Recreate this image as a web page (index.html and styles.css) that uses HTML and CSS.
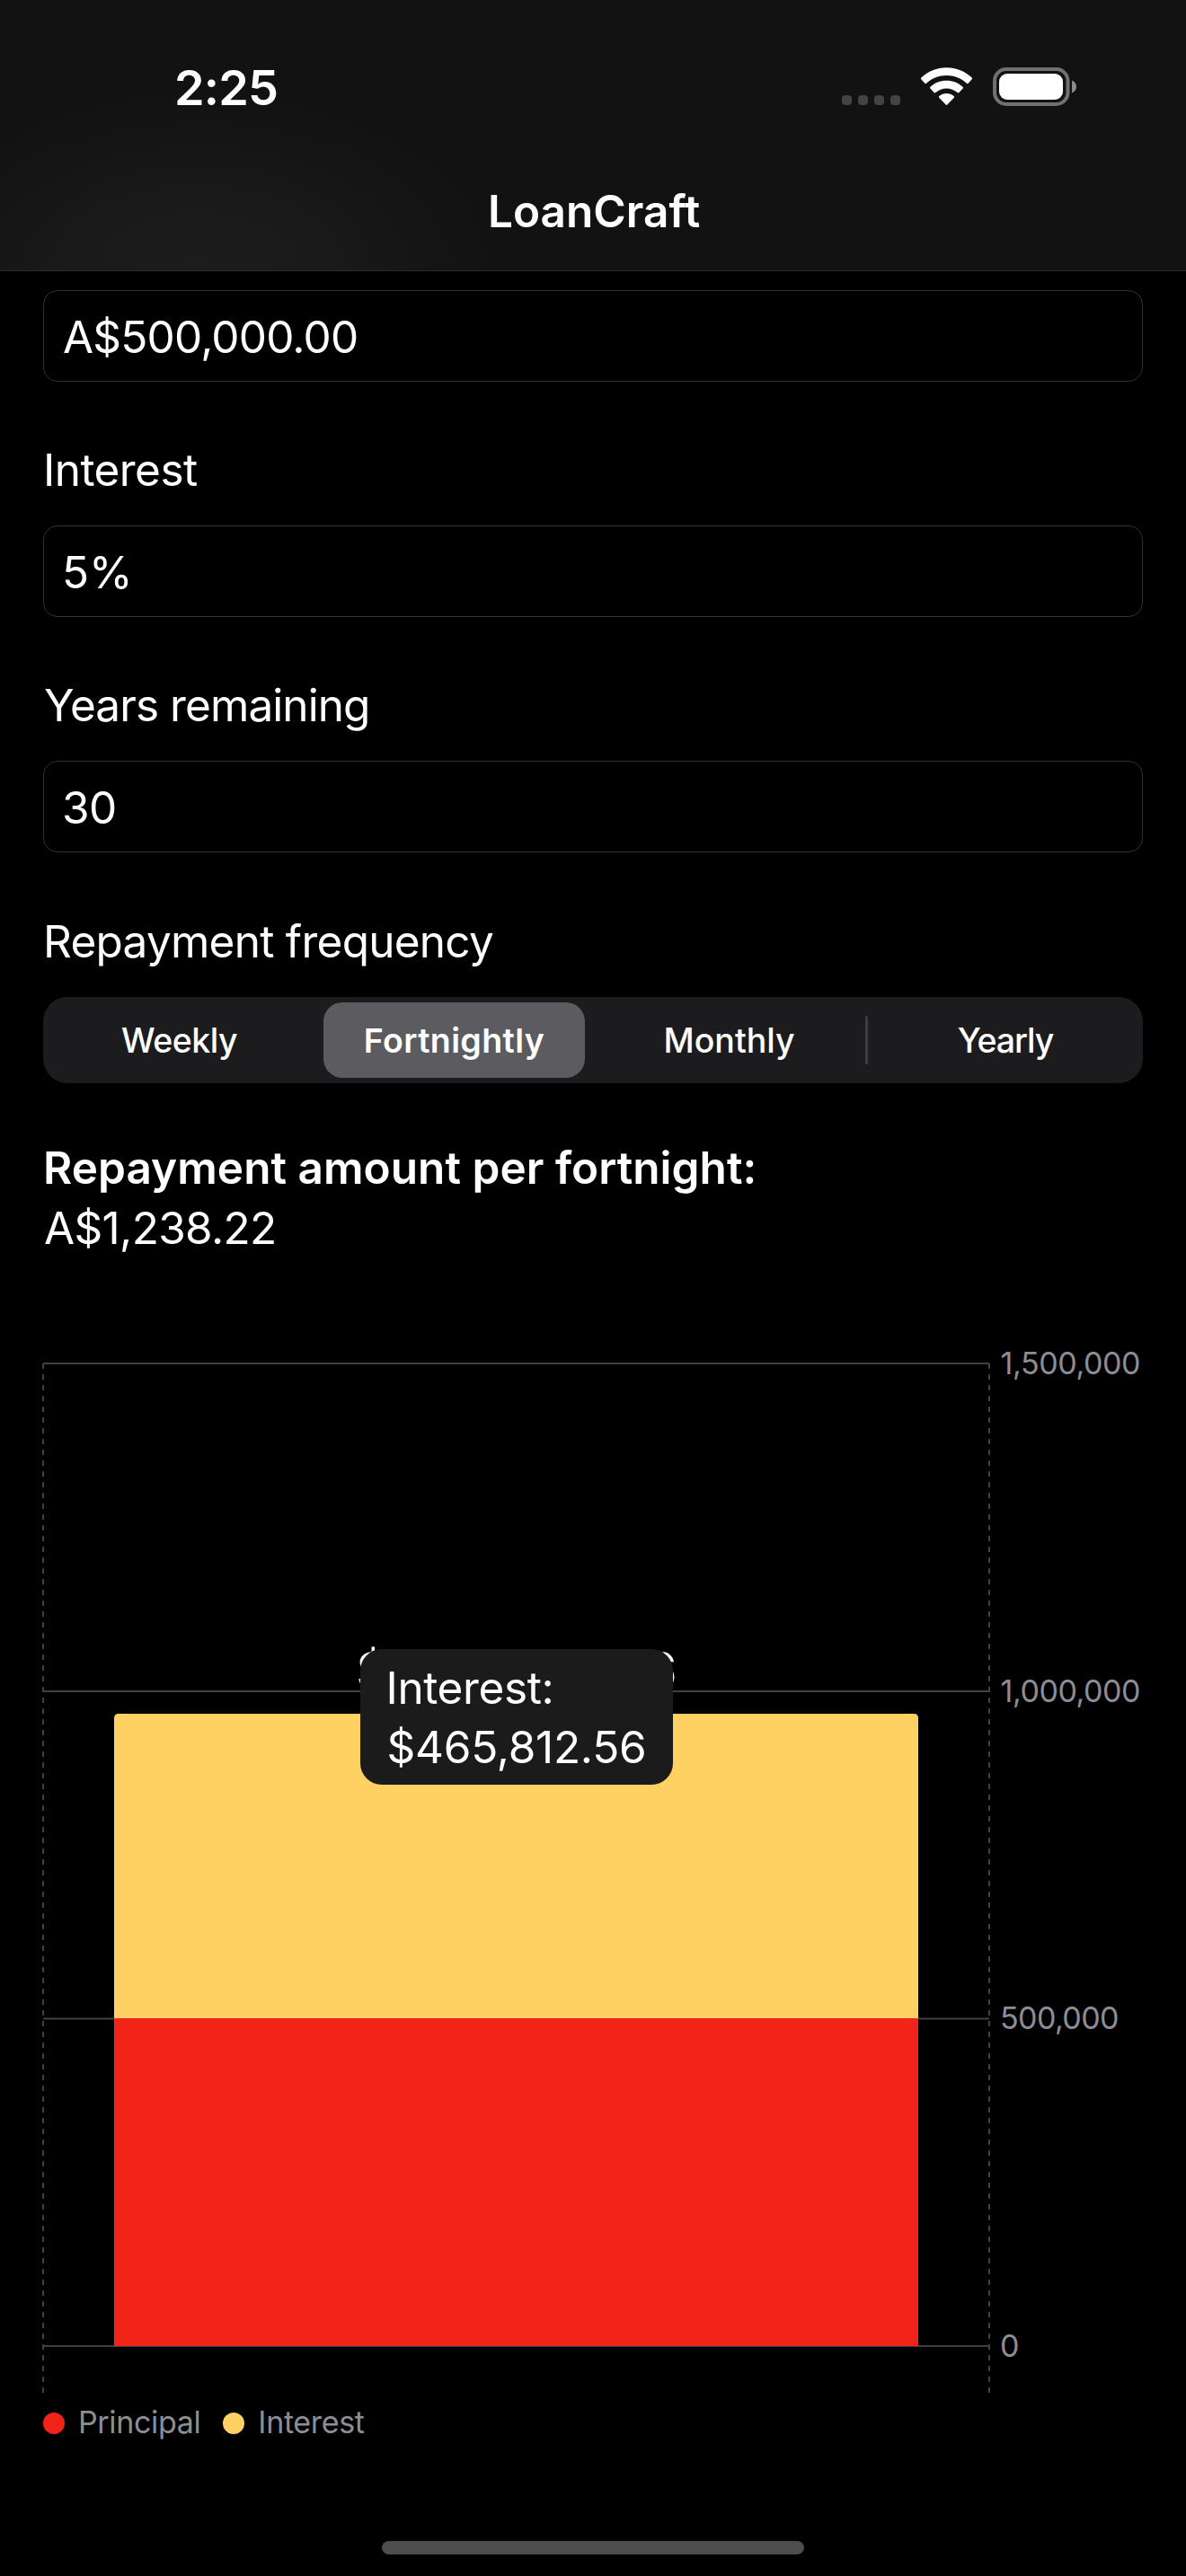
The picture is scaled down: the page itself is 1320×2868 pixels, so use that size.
FILE: index.html
```html
<!DOCTYPE html>
<html lang="en">
<head>
<meta charset="utf-8">
<title>LoanCraft</title>
<link rel="stylesheet" href="styles.css">
</head>
<body>
<header class="header">
  <div class="status">
    <span class="time">2:25</span>
    <svg class="status-icons" width="264" height="44" viewBox="936 75 264 44" aria-hidden="true">
      <g fill="#434343">
        <rect x="937" y="106" width="11" height="11" rx="4"/>
        <rect x="955" y="106" width="11" height="11" rx="4"/>
        <rect x="973" y="106" width="11" height="11" rx="4"/>
        <rect x="991" y="106" width="11" height="11" rx="4"/>
      </g>
      <g fill="#fff">
        <path d="M1053.500 75.200C1042.800 75.200 1032.800 79.300 1025.300 86.500Q1024.400 87.400 1025.300 88.300L1029.300 92.700Q1030.200 93.600 1031.100 92.700C1037.100 87.100 1045 84 1053.500 84C1062 84 1069.900 87.100 1075.900 92.700Q1076.800 93.600 1077.700 92.700L1081.700 88.300Q1082.600 87.400 1081.700 86.500C1074.200 79.300 1064.200 75.200 1053.500 75.200Z"/>
        <path d="M1053.500 89.700C1046.500 89.700 1040.200 92.300 1035.400 96.700Q1034.500 97.600 1035.400 98.500L1039.600 103Q1040.500 103.900 1041.400 103C1044.700 100.100 1048.900 98.400 1053.500 98.400C1058.100 98.400 1062.300 100.100 1065.600 103Q1066.500 103.900 1067.400 103L1071.600 98.500Q1072.500 97.600 1071.600 96.700C1066.800 92.300 1060.500 89.700 1053.500 89.700Z"/>
        <path d="M1053.500 103.900C1050.400 103.900 1047.500 105 1045.300 106.900Q1044.300 107.800 1045.200 108.700L1052.600 116.500Q1053.500 117.400 1054.400 116.500L1061.800 108.700Q1062.700 107.800 1061.700 106.900C1059.500 105 1056.600 103.900 1053.500 103.900Z"/>
      </g>
      <rect x="1107" y="77" width="81.500" height="39" rx="13" fill="none" stroke="#717171" stroke-width="4"/>
      <rect x="1112" y="82" width="71" height="29" rx="9" fill="#fff"/>
      <path d="M1193 89.500C1196.500 91 1198 93.500 1198 96.500S1196.500 102 1193 103.500Z" fill="#8b8b8b"/>
    </svg>
  </div>
  <h1 class="title">LoanCraft</h1>
</header>

<main class="content">
  <div class="field amount">A$500,000.00</div>

  <label class="label interest">Interest</label>
  <div class="field percent">5%</div>

  <label class="label years">Years remaining</label>
  <div class="field term">30</div>

  <label class="label frequency">Repayment frequency</label>
  <div class="segments">
    <span class="segment weekly">Weekly</span>
    <span class="segment selected">Fortnightly</span>
    <span class="segment monthly">Monthly</span>
    <span class="divider"></span>
    <span class="segment yearly">Yearly</span>
  </div>

  <section class="result">
    <strong class="result-title">Repayment amount per fortnight:</strong>
    <span class="result-value">A$1,238.22</span>
  </section>

  <section class="chart">
    <svg class="plot" width="1232" height="1170" viewBox="48 1500 1232 1170">
      <g stroke="#414143" stroke-width="2">
        <path d="M48 1518H1101M48 1883H1101M48 2247.500H1101M48 2612H1101"/>
        <path d="M48 1518V2664M1101 1518V2664" stroke-dasharray="6 6"/>
      </g>
      <path d="M127 2248V1913Q127 1908 132 1908H1017Q1022 1908 1022 1913V2248Z" fill="#ffd062"/>
      <rect x="127" y="2247" width="895" height="365" fill="#f22319"/>
      <g class="axis">
        <text x="1113.500" y="1530" textLength="156">1,500,000</text>
        <text x="1113.500" y="1894.500" textLength="156">1,000,000</text>
        <text x="1113" y="2259" textLength="132.500">500,000</text>
        <text x="1113" y="2624">0</text>
      </g>
      <text class="total" x="396.500" y="1880.500" textLength="357">$965,812.56</text>
    </svg>
    <div class="tooltip">
      <div class="tooltip-name">Interest:</div>
      <div class="tooltip-value">$465,812.56</div>
    </div>
  </section>

  <div class="legend">
    <span class="dot principal"></span><span class="legend-text">Principal</span>
    <span class="dot interest-dot"></span><span class="legend-text">Interest</span>
  </div>
</main>
<div class="home-indicator"></div>
</body>
</html>
```
FILE: styles.css
```css
* { box-sizing: border-box; }

body {
  margin: 0;
  width: 1320px;
  height: 2868px;
  overflow: hidden;
  display: flex;
  flex-direction: column;
  background: #000;
  color: #fff;
  font: 400 49.5px/60px Inter, "Liberation Sans", sans-serif;
  white-space: nowrap;
}

.header {
  height: 302px;
  border-bottom: 1px solid #2b2b2b;
  background:
    radial-gradient(ellipse 340px 200px at 220px 302px, #1d1d1d 0%, #1a1a1a 40%, #141414 80%, rgba(18, 18, 18, 0) 100%),
    #121212;
}

.status {
  display: flex;
  justify-content: space-between;
  height: 205px;
  padding: 65px 120px 0 194px;
}

.time {
  font-size: 54px;
  line-height: 65px;
  font-weight: 600;
  letter-spacing: -0.84px;
}

.status-icons { margin-top: 10px; }

.title {
  margin: 0;
  padding-left: 543px;
  font-size: 49.5px;
  line-height: 60px;
  font-weight: 600;
}

.content {
  display: flex;
  flex-direction: column;
  padding: 21px 48px 0;
}

.field {
  height: 102px;
  padding: 21px 21px 0;
  border: 1px solid #323232;
  border-radius: 16px;
}

.amount { letter-spacing: -0.81px; }
.percent { letter-spacing: 0; padding-left: 20px; }
.term { letter-spacing: -0.57px; padding-left: 20px; }

.label { margin: 68px 0 32px; }
.interest { letter-spacing: -0.56px; }
.years { letter-spacing: -0.92px; padding-left: 1px; }
.frequency { margin-top: 69px; letter-spacing: -0.74px; }

.segments {
  display: flex;
  align-items: center;
  height: 96px;
  border-radius: 27px;
  background: #1c1c1e;
  font-size: 37.5px;
  line-height: 85px;
  font-weight: 500;
  text-align: center;
}

.weekly { width: 312px; padding-right: 9px; letter-spacing: -0.5px; }
.selected {
  width: 291px;
  height: 84px;
  border-radius: 21px;
  background: #5b5b60;
  font-weight: 600;
  letter-spacing: 0.39px;
}
.monthly { width: 312px; padding-left: 9px; }
.divider { width: 3px; height: 54px; border-radius: 2px; background: #3e3e41; }
.yearly { width: 306px; letter-spacing: -1.06px; }

.result {
  display: flex;
  flex-direction: column;
  margin-top: 61px;
  line-height: 67px;
}
.result-title { font-weight: 600; letter-spacing: 0.04px; }
.result-value { padding-left: 1px; letter-spacing: -0.67px; }

.chart {
  position: relative;
  margin-top: 99px;
  height: 1170px;
}
.plot { display: block; overflow: visible; }
.axis { fill: #8d8d93; font-size: 34px; }
.total { fill: #fff; font-size: 58px; font-weight: 500; }

.tooltip {
  position: absolute;
  left: 353px;
  top: 336px;
  width: 348px;
  height: 151px;
  padding: 10px 0 0 28.5px;
  border-radius: 24px;
  background: #1b1b1b;
  line-height: 66px;
}
.tooltip-name { letter-spacing: -0.39px; }
.tooltip-value { letter-spacing: -0.24px; padding-left: 1px; }

.legend {
  display: flex;
  align-items: flex-start;
  height: 42px;
  margin-top: 7px;
  color: #8d8d93;
  font-size: 34px;
  line-height: 40px;
  letter-spacing: -0.35px;
}
.dot {
  width: 24px;
  height: 24px;
  margin: 9px 15px 0 0;
  border-radius: 50%;
}
.principal { background: #f22319; }
.interest-dot { margin-left: 25px; background: #ffd062; }

.home-indicator {
  width: 470px;
  height: 15px;
  margin: 110px auto 0;
  border-radius: 8px;
  background: #4d4d4d;
}
```
